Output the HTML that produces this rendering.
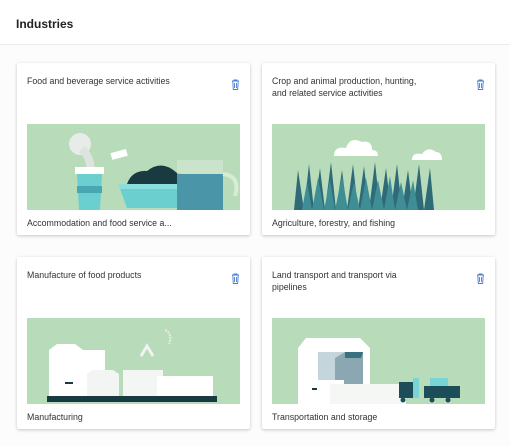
<!DOCTYPE html>
<html><head><style>
body{margin:0;width:510px;height:446px;background:#f8f8f8;font-family:"Liberation Sans",sans-serif;position:relative;overflow:hidden}
.hdr{position:absolute;left:0;top:0;width:510px;height:44px;background:#fff;border-bottom:1px solid #ececec}
.hdr span{position:absolute;left:16px;top:17px;font-size:12px;font-weight:bold;color:#222}
.main{position:absolute;left:0;top:45px;width:510px;height:401px;background:#fcfcfc}
.card{position:absolute;width:233px;height:172px;background:#fff;border-radius:2px;box-shadow:0 1px 3px rgba(0,0,0,.22)}
.t{position:absolute;left:10px;top:12px;width:200px;font-size:8.8px;line-height:12px;color:#333;white-space:nowrap}
.tr{position:absolute;right:10px;top:16px}
.img{position:absolute;left:10px;top:61px;width:213px;height:86px;background:#b8dcb9;overflow:hidden}
.lb{position:absolute;left:10px;top:155px;font-size:8.8px;color:#333}
</style></head><body>
<div class="hdr"><span>Industries</span></div>
<div class="main"></div>

<div class="card" style="left:17px;top:63px">
<div class="t">Food and beverage service activities</div>
<svg class="tr" width="9" height="11" viewBox="0 0 9 11"><path d="M1 2h7M3 2V1h3v1M1.8 2.5l.5 8h4.4l.5-8M3.5 4v5M5.5 4v5" stroke="#4a7fd0" fill="none" stroke-width=".9"/></svg>
<div class="img"><svg width="213" height="86">
<circle cx="53" cy="20" r="11" fill="#e8ece8"/><path d="M55 25q10 10 8 23" stroke="#dfe3df" stroke-width="8" fill="none"/>
<rect x="48" y="43" width="29" height="7" fill="#fff"/><path d="M50 50h25l-2 36h-21z" fill="#6bcfd0"/><rect x="50" y="62" width="25" height="7" fill="#4aa6b0"/>
<rect x="84" y="27" width="16" height="7" fill="#fff" transform="rotate(-15 92 30)"/>
<path d="M100 60q5-14 20-13q15-12 30 2q15 2 20 12z" fill="#183a40"/>
<path d="M92 62h100l-8 22h-84z" fill="#6bcfd0"/><rect x="92" y="60" width="100" height="5" fill="#8adedd"/>
<path d="M150 36h46v50h-46z" fill="#cfe5d0" opacity=".8"/><rect x="150" y="50" width="46" height="36" fill="#4a96a8"/>
<path d="M196 50q18 2 12 22" stroke="#d8ead8" stroke-width="4" fill="none"/></svg></div>
<div class="lb">Accommodation and food service a...</div>
</div>

<div class="card" style="left:262px;top:63px">
<div class="t">Crop and animal production, hunting,<br>and related service activities</div>
<svg class="tr" width="9" height="11" viewBox="0 0 9 11"><path d="M1 2h7M3 2V1h3v1M1.8 2.5l.5 8h4.4l.5-8M3.5 4v5M5.5 4v5" stroke="#4a7fd0" fill="none" stroke-width=".9"/></svg>
<div class="img"><svg width="213" height="86">
<path d="M62 32q0-10 12-8q4-12 16-6q10-2 10 8q6 0 6 6h-44z" fill="#fff"/>
<path d="M140 36q0-8 10-6q6-8 14-2q6 0 6 8z" fill="#fff"/>
<path d="M22 86l4-40 6 40 5-46 5 46 6-42 5 42 6-48 5 48 6-40 5 40 6-46 5 46 6-44 5 44 6-48 5 48 6-42 5 42 6-46 5 46 6-40 5 40 6-46 5 46 6-42 4 42z" fill="#2f6a78"/>
<path d="M30 86l5-28 5 28 6-32 6 32 6-30 5 30 7-34 6 34 6-28 6 28 6-32 6 32 6-30 6 30 6-34 5 34 6-28 6 28 6-30 5 30z" fill="#3f8e96"/></svg></div>
<div class="lb">Agriculture, forestry, and fishing</div>
</div>

<div class="card" style="left:17px;top:257px">
<div class="t">Manufacture of food products</div>
<svg class="tr" width="9" height="11" viewBox="0 0 9 11"><path d="M1 2h7M3 2V1h3v1M1.8 2.5l.5 8h4.4l.5-8M3.5 4v5M5.5 4v5" stroke="#4a7fd0" fill="none" stroke-width=".9"/></svg>
<div class="img"><svg width="213" height="86">
<path d="M22 32l8-6h18l8 6h22v46h-56z" fill="#fff"/><rect x="38" y="64" width="8" height="2" fill="#183a40"/>
<path d="M60 56l6-4h20l6 4v22h-32z" fill="#f2f5f2"/><path d="M96 52h40v26h-40z" fill="#f4f6f4"/>
<path d="M130 58h56v20h-56z" fill="#fff"/><path d="M114 38l6-10 6 10" stroke="#f2f2f2" stroke-width="3" fill="none"/>
<path d="M138 12q8 4 4 14" stroke="#e8ece8" stroke-width="2" fill="none" stroke-dasharray="2 1"/>
<rect x="20" y="78" width="170" height="6" fill="#183a40"/></svg></div>
<div class="lb">Manufacturing</div>
</div>

<div class="card" style="left:262px;top:257px">
<div class="t">Land transport and transport via<br>pipelines</div>
<svg class="tr" width="9" height="11" viewBox="0 0 9 11"><path d="M1 2h7M3 2V1h3v1M1.8 2.5l.5 8h4.4l.5-8M3.5 4v5M5.5 4v5" stroke="#4a7fd0" fill="none" stroke-width=".9"/></svg>
<div class="img"><svg width="213" height="86">
<path d="M26 30l8-10h54l10 10v56h-72z" fill="#fff"/><rect x="46" y="34" width="30" height="30" fill="#c4d6dc"/>
<path d="M63 40l10-6h18v40h-28z" fill="#8ba8b2"/><path d="M73 34h18l-2 6h-16z" fill="#3b7080"/>
<path d="M28 62h44v24h-44z" fill="#fff"/><rect x="40" y="70" width="5" height="2" fill="#183a40"/>
<path d="M58 66h76v20h-76z" fill="#f5f7f5"/>
<path d="M127 64h14v16h-14z" fill="#1e4d5a"/><path d="M141 60h6v20h-6z" fill="#79d4d6"/>
<path d="M158 60h18v14h-18z" fill="#79d4d6"/><path d="M152 68h36v12h-36z" fill="#1e4d5a"/>
<circle cx="131" cy="82" r="2.5" fill="#1e4d5a"/><circle cx="160" cy="82" r="2.5" fill="#1e4d5a"/><circle cx="176" cy="82" r="2.5" fill="#1e4d5a"/></svg></div>
<div class="lb">Transportation and storage</div>
</div>
</body></html>
